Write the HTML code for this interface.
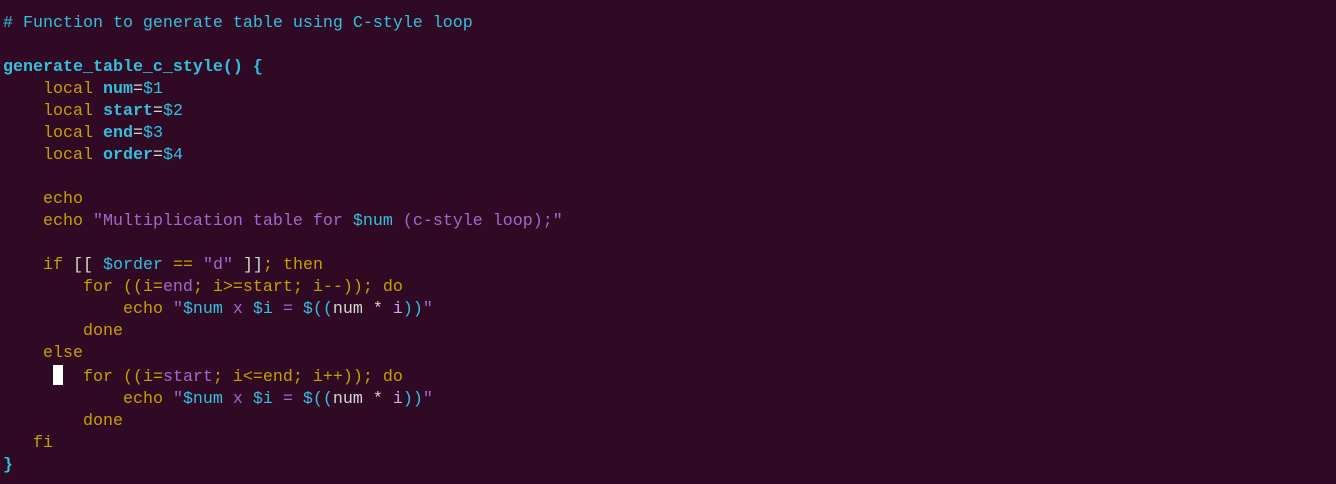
<!DOCTYPE html>
<html><head><style>
html,body{margin:0;padding:0;background:#300a24;width:1336px;height:484px;overflow:hidden}
pre{margin:0;padding:13px 0 0 3px;font-family:"Liberation Mono",monospace;font-size:16.67px;line-height:22px;color:#d0c8cc}
.c{color:#33c0dc}.y{color:#c4a000}.p{color:#a566c8}.b{color:#33c0dc;font-weight:bold}.w{color:#d3d7cf}.l{color:#c8a8e8}
.cur{display:inline-block;width:10px;height:20px;background:#fff;vertical-align:-4px}
</style></head><body><pre><span class="c"># Function to generate table using C-style loop</span>

<span class="b">generate_table_c_style() {</span>
    <span class="y">local</span> <span class="b">num</span><span class="w">=</span><span class="c">$1</span>
    <span class="y">local</span> <span class="b">start</span><span class="w">=</span><span class="c">$2</span>
    <span class="y">local</span> <span class="b">end</span><span class="w">=</span><span class="c">$3</span>
    <span class="y">local</span> <span class="b">order</span><span class="w">=</span><span class="c">$4</span>

    <span class="y">echo</span>
    <span class="y">echo</span> <span class="p">"Multiplication table for </span><span class="c">$num</span><span class="p"> (c-style loop);"</span>

    <span class="y">if</span> <span class="w">[[</span> <span class="c">$order</span> <span class="y">==</span> <span class="p">"d"</span> <span class="w">]]</span><span class="y">; then</span>
        <span class="y">for ((i=</span><span class="p">end</span><span class="y">; i&gt;=start; i--)); do</span>
            <span class="y">echo</span> <span class="p">"</span><span class="c">$num</span><span class="p"> x </span><span class="c">$i</span><span class="p"> = </span><span class="c">$((</span><span class="w">num</span> <span class="w">*</span> <span class="l">i</span><span class="c">))</span><span class="p">"</span>
        <span class="y">done</span>
    <span class="y">else</span>
     <span class="cur"></span>  <span class="y">for ((i=</span><span class="p">start</span><span class="y">; i&lt;=end; i++)); do</span>
            <span class="y">echo</span> <span class="p">"</span><span class="c">$num</span><span class="p"> x </span><span class="c">$i</span><span class="p"> = </span><span class="c">$((</span><span class="w">num</span> <span class="w">*</span> <span class="l">i</span><span class="c">))</span><span class="p">"</span>
        <span class="y">done</span>
   <span class="y">fi</span>
<span class="b">}</span></pre></body></html>
